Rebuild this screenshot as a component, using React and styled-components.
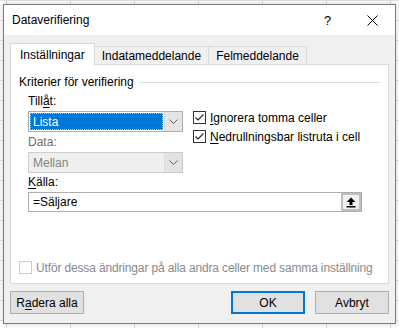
import React from "react";
import styled, { createGlobalStyle } from "styled-components";

const Global = createGlobalStyle`
  html, body {
    margin: 0;
    padding: 0;
    height: 100%;
  }
  body {
    background-color: #ffffff;
    background-image:
      linear-gradient(to right, #d9d9d9 1px, transparent 1px),
      linear-gradient(to bottom, #e2e2e2 1px, transparent 1px);
    background-size: 64px 20px;
    background-position: 6px 0;
    font-family: "Liberation Sans", Arial, sans-serif;
    font-size: 12px;
    color: #000;
    overflow: hidden;
  }
`;

const Dialog = styled.div`
  margin: 4px 0 0 3px;
  width: 391px;
  height: 318px;
  border: 1px solid #7c7c7c;
  box-shadow: 0 0 6px rgba(0, 0, 0, 0.18);
  display: flex;
  flex-direction: column;
  background: #f0f0f0;
`;

const TitleBar = styled.div`
  height: 30px;
  background: #ffffff;
  display: flex;
  align-items: center;
  padding-left: 8px;
`;

const Title = styled.div`
  flex: 1;
  font-size: 12px;
`;

const TitleButton = styled.div`
  width: 45px;
  height: 30px;
  display: flex;
  align-items: center;
  justify-content: center;
  font-size: 13px;
`;

const Body = styled.div`
  flex: 1;
  display: flex;
  flex-direction: column;
  padding: 8px 6px 0 6px;
`;

const TabList = styled.div`
  display: flex;
  align-items: flex-end;
  height: 22px;
  margin-bottom: -1px;
  position: relative;
  z-index: 1;
`;

const Tab = styled.div`
  height: ${(p) => (p.$active ? 22 : 19)}px;
  padding: 0 ${(p) => (p.$active ? 9 : 7)}px;
  box-sizing: border-box;
  display: flex;
  align-items: center;
  padding-top: ${(p) => (p.$active ? 0 : 1)}px;
  background: ${(p) => (p.$active ? "#ffffff" : "#f0f0f0")};
  border: 1px solid #d9d9d9;
  border-bottom: ${(p) => (p.$active ? "none" : "1px solid #d9d9d9")};
  margin-left: ${(p) => (p.$active ? 0 : -1)}px;
`;

const Panel = styled.div`
  height: 220px;
  box-sizing: border-box;
  width: 379px;
  background: #ffffff;
  border: 1px solid #d9d9d9;
  padding: 9px 8px 9px 8px;
  display: flex;
  flex-direction: column;
`;

const Legend = styled.div`
  height: 16px;
  display: flex;
  align-items: center;
  gap: 5px;

  &::after {
    content: "";
    flex: 1;
    height: 1px;
    background: #dcdcdc;
  }
`;

const Group = styled.div`
  padding-left: 9px;
  margin-top: 4px;
  display: flex;
  flex-direction: column;
`;

const Row = styled.div`
  display: flex;
`;

const Column = styled.div`
  width: 155px;
  display: flex;
  flex-direction: column;
`;

const Label = styled.div`
  height: 15px;
  line-height: 15px;
  margin-top: ${(p) => p.$top || 0}px;
  color: ${(p) => (p.$disabled ? "#6f6f6f" : "#000")};
`;

const Select = styled.div`
  height: 21px;
  margin-top: 2px;
  box-sizing: border-box;
  border: 1px solid ${(p) => (p.$disabled ? "#cccccc" : "#adadad")};
  background: ${(p) => (p.$disabled ? "#efefef" : "#ffffff")};
  display: flex;
  margin-bottom: 1px;
`;

const SelectValue = styled.div`
  flex: 1;
  margin: 1px;
  padding-left: 3px;
  display: flex;
  align-items: center;
  color: ${(p) => (p.$selected ? "#ffffff" : "#838383")};
  background: ${(p) => (p.$selected ? "#0078d7" : "transparent")};
  outline: ${(p) => (p.$selected ? "1px dotted #e8b84a" : "none")};
  outline-offset: -1px;
`;

const Arrow = styled.div`
  width: 17px;
  background: ${(p) => (p.$disabled ? "#e3e3e3" : "#e5e5e5")};
  border-left: 1px solid ${(p) => (p.$disabled ? "#dcdcdc" : "#d6d6d6")};
  display: flex;
  align-items: center;
  justify-content: center;
`;

const Checks = styled.div`
  margin-left: 10px;
  padding-top: 17px;
  display: flex;
  flex-direction: column;
  gap: 6px;
`;

const CheckRow = styled.div`
  height: 13px;
  display: flex;
  align-items: center;
  gap: 4px;
  white-space: nowrap;
  color: ${(p) => (p.$disabled ? "#8a8a8a" : "#000")};
`;

const Box = styled.div`
  flex: none;
  width: 13px;
  height: 13px;
  box-sizing: border-box;
  border: 1px solid ${(p) => (p.$disabled ? "#cccccc" : "#333333")};
  background: #ffffff;
  display: flex;
  align-items: center;
  justify-content: center;
`;

const FooterText = styled.span`
  letter-spacing: -0.15px;
`;

const Input = styled.div`
  width: 334px;
  height: 20px;
  margin-top: 2px;
  box-sizing: border-box;
  border: 1px solid #adadad;
  background: #ffffff;
  display: flex;
  align-items: center;
`;

const InputText = styled.div`
  flex: 1;
  padding-left: 4px;
`;

const PickButton = styled.div`
  width: 20px;
  height: 18px;
  box-sizing: border-box;
  border: 2px solid #bfbfbf;
  background: #f2f2f2;
  display: flex;
  align-items: center;
  justify-content: center;
`;

const Footer = styled.div`
  margin-top: auto;
`;

const Buttons = styled.div`
  display: flex;
  margin-top: 7px;
`;

const Button = styled.div`
  width: 74px;
  height: 23px;
  box-sizing: border-box;
  border: ${(p) => (p.$primary ? "2px solid #0078d7" : "1px solid #adadad")};
  background: #e1e1e1;
  display: flex;
  align-items: center;
  justify-content: center;
  margin-left: ${(p) => p.$left || 0}px;
`;

const U = styled.span`
  text-decoration: underline;
  text-underline-offset: 2px;
`;

const Chevron = () => (
  <svg width="9" height="5" viewBox="0 0 9 5">
    <path d="M0.5 0.5 L4.5 4.5 L8.5 0.5" fill="none" stroke="#606060" strokeWidth="1" />
  </svg>
);

const Tick = () => (
  <svg width="11" height="11" viewBox="0 0 11 11">
    <path d="M1.5 5.5 L4 8 L9.5 2.5" fill="none" stroke="#222" strokeWidth="1.1" />
  </svg>
);

const UpArrow = () => (
  <svg width="10" height="11" viewBox="0 0 10 11">
    <path d="M5 0.5 L9.5 5 L6.5 5 L6.5 8 L3.5 8 L3.5 5 L0.5 5 Z" fill="#000" />
    <rect x="0.5" y="9" width="9" height="1.5" fill="#000" />
  </svg>
);

const CloseIcon = () => (
  <svg width="11" height="11" viewBox="0 0 11 11">
    <path d="M0.5 0.5 L10.5 10.5 M10.5 0.5 L0.5 10.5" stroke="#000" strokeWidth="1" />
  </svg>
);

const App = () => {
  return (
    <>
      <Global />
      <Dialog>
        <TitleBar>
          <Title>Dataverifiering</Title>
          <TitleButton>?</TitleButton>
          <TitleButton>
            <CloseIcon />
          </TitleButton>
        </TitleBar>
        <Body>
          <TabList>
            <Tab $active>Inställningar</Tab>
            <Tab>Indatameddelande</Tab>
            <Tab>Felmeddelande</Tab>
          </TabList>
          <Panel>
            <Legend>Kriterier för verifiering</Legend>
            <Group>
              <Row>
                <Column>
                  <Label>
                    Till<U>å</U>t:
                  </Label>
                  <Select>
                    <SelectValue $selected>Lista</SelectValue>
                    <Arrow>
                      <Chevron />
                    </Arrow>
                  </Select>
                  <Label $top={2} $disabled>
                    Data:
                  </Label>
                  <Select $disabled>
                    <SelectValue>Mellan</SelectValue>
                    <Arrow $disabled>
                      <Chevron />
                    </Arrow>
                  </Select>
                </Column>
                <Checks>
                  <CheckRow>
                    <Box>
                      <Tick />
                    </Box>
                    <span>
                      <U>I</U>gnorera tomma celler
                    </span>
                  </CheckRow>
                  <CheckRow>
                    <Box>
                      <Tick />
                    </Box>
                    <span>
                      <U>N</U>edrullningsbar listruta i cell
                    </span>
                  </CheckRow>
                </Checks>
              </Row>
              <Label $top={1}>
                <U>K</U>älla:
              </Label>
              <Input>
                <InputText>=Säljare</InputText>
                <PickButton>
                  <UpArrow />
                </PickButton>
              </Input>
            </Group>
            <Footer>
              <CheckRow $disabled>
                <Box $disabled />
                <FooterText>Utför dessa ändringar på alla andra celler med samma inställning</FooterText>
              </CheckRow>
            </Footer>
          </Panel>
          <Buttons>
            <Button>
              R<U>a</U>dera alla
            </Button>
            <Button $primary $left={147}>
              OK
            </Button>
            <Button $left={10}>Avbryt</Button>
          </Buttons>
        </Body>
      </Dialog>
    </>
  );
};

export default App;
